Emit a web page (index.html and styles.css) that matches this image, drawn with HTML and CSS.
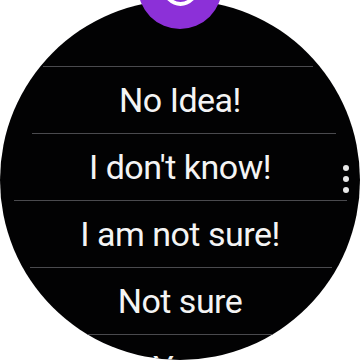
FILE: index.html
```html
<!DOCTYPE html>
<html>
<head>
<meta charset="utf-8">
<link rel="stylesheet" href="styles.css">
</head>
<body>
<div class="screen">
  <div class="watch">
    <div class="list">
      <div class="spacer"></div>
      <div class="sep sep-1"></div>
      <div class="item">No Idea!</div>
      <div class="sep sep-2"></div>
      <div class="item">I don't know!</div>
      <div class="sep sep-3"></div>
      <div class="item">I am not sure!</div>
      <div class="sep sep-4"></div>
      <div class="item">Not sure</div>
      <div class="sep sep-5"></div>
      <div class="item">Yes</div>
    </div>
    <div class="scroll-dots">
      <span class="dot"></span>
      <span class="dot"></span>
      <span class="dot"></span>
    </div>
  </div>
  <div class="top-button"><div class="ring"></div></div>
</div>
</body>
</html>
```
FILE: styles.css
```css
html, body {
  margin: 0;
  padding: 0;
  background: #ffffff;
}
.screen {
  position: relative;
  width: 360px;
  height: 360px;
  overflow: hidden;
  background: #ffffff;
}
.watch {
  position: relative;
  width: 360px;
  height: 360px;
  border-radius: 50%;
  background: #020203;
  overflow: hidden;
}
.list {
  display: flex;
  flex-direction: column;
}
.spacer {
  height: 66px;
}
.sep {
  height: 1px;
  background: #4a4a4e;
}
.sep-1 { margin: 0 47px 0 43px; }
.sep-2 { margin: 0 24px 0 32px; }
.sep-3 { margin: 0 13px 0 14px; }
.sep-4 { margin: 0 28px 0 30px; }
.sep-5 { margin: 0 40px; }
.item {
  height: 66px;
  display: flex;
  align-items: center;
  justify-content: center;
  color: #f4f4f4;
  font-family: Roboto, "Liberation Sans", sans-serif;
  font-size: 34px;
  letter-spacing: -0.5px;
  line-height: 1;
}
.scroll-dots {
  position: absolute;
  right: 11px;
  top: 165px;
  display: flex;
  flex-direction: column;
  gap: 5px;
}
.dot {
  width: 6px;
  height: 6px;
  border-radius: 50%;
  background: #e8e8e8;
}
.top-button {
  position: absolute;
  left: 138px;
  top: -55px;
  width: 84px;
  height: 84px;
  border-radius: 50%;
  background: #8c30d8;
  display: flex;
  align-items: center;
  justify-content: center;
}
.ring {
  width: 27px;
  height: 27px;
  border: 4px solid #ffffff;
  border-radius: 50%;
  margin-top: 2px;
}
```
